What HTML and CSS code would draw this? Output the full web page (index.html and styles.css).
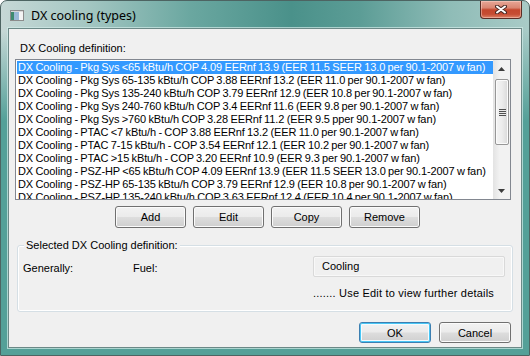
FILE: index.html
```html
<!DOCTYPE html>
<html lang="en">
<head>
    <meta charset="UTF-8">
    <title>DX cooling (types)</title>
    <link rel="stylesheet" href="styles.css">
</head>
<body>
    <div class="window">
        <div class="titlebar">
            <svg class="app-icon" width="14" height="11" viewBox="0 0 14 11">
                <rect x="0.5" y="0.5" width="13" height="10" fill="#f4f4f4" stroke="#8c8c8c"/>
                <rect x="1" y="1" width="3" height="9" fill="#3f8a6e"/>
                <rect x="4" y="1" width="5" height="9" fill="#9bb9d6"/>
                <rect x="1" y="1" width="12" height="1" fill="#d8d8d8"/>
            </svg>
            <span class="title">DX cooling (types)</span>
            <div class="close-btn">
                <svg width="12" height="9" viewBox="0 0 12 9">
                    <path d="M2 1.5 L10 7.5 M10 1.5 L2 7.5" stroke="#4a2a24" stroke-width="4" stroke-linecap="round"/>
                    <path d="M2 1.5 L10 7.5 M10 1.5 L2 7.5" stroke="#ffffff" stroke-width="2" stroke-linecap="round"/>
                </svg>
            </div>
        </div>

        <div class="client">
            <div class="caption">DX Cooling definition:</div>

            <div class="listbox">
                <ul class="items">
                    <li class="selected">DX Cooling - Pkg Sys &lt;65 kBtu/h COP 4.09 EERnf 13.9 (EER 11.5 SEER 13.0 per 90.1-2007 w fan)</li>
                    <li>DX Cooling - Pkg Sys 65-135 kBtu/h COP 3.88 EERnf 13.2 (EER 11.0 per 90.1-2007 w fan)</li>
                    <li>DX Cooling - Pkg Sys 135-240 kBtu/h COP 3.79 EERnf 12.9 (EER 10.8 per 90.1-2007 w fan)</li>
                    <li>DX Cooling - Pkg Sys 240-760 kBtu/h COP 3.4 EERnf 11.6 (EER 9.8 per 90.1-2007 w fan)</li>
                    <li>DX Cooling - Pkg Sys &gt;760 kBtu/h COP 3.28 EERnf 11.2 (EER 9.5 pper 90.1-2007 w fan)</li>
                    <li>DX Cooling - PTAC &lt;7 kBtu/h - COP 3.88 EERnf 13.2 (EER 11.0 per 90.1-2007 w fan)</li>
                    <li>DX Cooling - PTAC 7-15 kBtu/h - COP 3.54 EERnf 12.1 (EER 10.2 per 90.1-2007 w fan)</li>
                    <li>DX Cooling - PTAC &gt;15 kBtu/h - COP 3.20 EERnf 10.9 (EER 9.3 per 90.1-2007 w fan)</li>
                    <li>DX Cooling - PSZ-HP &lt;65 kBtu/h COP 4.09 EERnf 13.9 (EER 11.5 SEER 13.0 per 90.1-2007 w fan)</li>
                    <li>DX Cooling - PSZ-HP 65-135 kBtu/h COP 3.79 EERnf 12.9 (EER 10.8 per 90.1-2007 w fan)</li>
                    <li>DX Cooling - PSZ-HP 135-240 kBtu/h COP 3.63 EERnf 12.4 (EER 10.4 per 90.1-2007 w fan)</li>
                </ul>
                <div class="scrollbar">
                    <div class="sb-arrow">
                        <svg width="7" height="4" viewBox="0 0 7 4"><path d="M3.5 0 L7 4 L0 4 Z" fill="#3c3c3c"/></svg>
                    </div>
                    <div class="sb-track">
                        <div class="sb-thumb">
                            <span class="grip"></span>
                        </div>
                    </div>
                    <div class="sb-arrow">
                        <svg width="7" height="4" viewBox="0 0 7 4"><path d="M0 0 L7 0 L3.5 4 Z" fill="#3c3c3c"/></svg>
                    </div>
                </div>
            </div>

            <div class="list-actions">
                <button type="button" class="btn">Add</button>
                <button type="button" class="btn">Edit</button>
                <button type="button" class="btn">Copy</button>
                <button type="button" class="btn">Remove</button>
            </div>

            <div class="group">
                <div class="group-title">Selected DX Cooling definition:</div>
                <div class="group-row">
                    <span class="lbl lbl-general">Generally:</span>
                    <span class="lbl lbl-fuel">Fuel:</span>
                    <div class="field">Cooling</div>
                </div>
                <div class="hint">....... Use Edit to view further details</div>
            </div>

            <div class="dialog-actions">
                <button type="button" class="btn btn-wide btn-default">OK</button>
                <button type="button" class="btn btn-wide">Cancel</button>
            </div>
        </div>
    </div>
</body>
</html>
```

FILE: styles.css
```css
body {
    margin: 0;
    background: #ffffff;
    font-family: "Liberation Sans", Arial, sans-serif;
    font-size: 11px;
    color: #000;
}

.window {
    width: 530px;
    height: 356px;
    box-sizing: border-box;
    border: 1px solid #4d6462;
    border-radius: 7px 7px 0 0;
    background:
        linear-gradient(180deg, rgba(84, 158, 150, 0) 30px, #54a098 120px),
        linear-gradient(90deg, #c6d8d6 0%, #a5c7c3 16%, #6aa7a0 36%, #4a918a 55%, #5c9d96 68%, #8fbcb7 85%, #a9cbc7 100%);
}

.titlebar {
    height: 27px;
    display: flex;
    align-items: center;
}

.app-icon {
    margin-left: 9px;
    margin-top: 2px;
}

.title {
    margin-left: 7px;
    margin-top: 1px;
    font-family: "Noto Sans", sans-serif;
    font-size: 12.5px;
    color: #000;
}

.close-btn {
    margin-left: auto;
    margin-right: 7px;
    align-self: flex-start;
    width: 42px;
    height: 18px;
    box-sizing: border-box;
    border: 1px solid #5a2d25;
    border-top: none;
    border-radius: 0 0 4px 4px;
    background: linear-gradient(180deg, #e7a797 0%, #d98672 40%, #c4472d 52%, #c64d33 78%, #dd8468 100%);
    box-shadow: inset 0 0 0 1px rgba(255, 220, 210, 0.45);
    display: flex;
    align-items: center;
    justify-content: center;
}

.client {
    margin: 0 7px;
    width: 514px;
    height: 320px;
    box-sizing: border-box;
    border: 1px solid #6c8987;
    box-shadow: 0 0 0 1px rgba(210, 235, 232, 0.7);
    background: #f0f0f0;
    display: flex;
    flex-direction: column;
}

.caption {
    margin: 13px 0 0 11px;
    line-height: 13px;
}

/* list */
.listbox {
    margin: 4px 0 0 6px;
    width: 496px;
    height: 141px;
    box-sizing: border-box;
    border: 1px solid #828790;
    background: #fff;
    display: flex;
}

.items {
    flex: 1;
    margin: 0;
    padding: 1px 0 0 1px;
    list-style: none;
    overflow: hidden;
}

.items li {
    height: 13px;
    line-height: 13px;
    padding-left: 1px;
    white-space: nowrap;
    word-spacing: -0.6px;
    letter-spacing: -0.1px;
}

.items li.selected {
    background: #3399ff;
    color: #fff;
}

.scrollbar {
    width: 17px;
    display: flex;
    flex-direction: column;
    background: linear-gradient(90deg, #e3e3e3, #f2f2f2 40%, #f2f2f2);
}

.sb-arrow {
    height: 17px;
    display: flex;
    align-items: center;
    justify-content: center;
}

.sb-track {
    flex: 1;
}

.sb-thumb {
    margin: 2px 1px 0 2px;
    height: 66px;
    box-sizing: border-box;
    border: 1px solid #979797;
    border-radius: 2px;
    background: linear-gradient(90deg, #f4f4f4 0%, #ececec 50%, #d9d9d9 100%);
    box-shadow: inset 0 0 0 1px #fbfbfb;
    display: flex;
    align-items: center;
    justify-content: center;
}

.grip {
    width: 7px;
    height: 7px;
    background: repeating-linear-gradient(180deg, #4f4f4f 0, #4f4f4f 1px, #e8e8e8 1px, #e8e8e8 2px);
}

/* buttons */
.list-actions {
    margin-top: 6px;
    padding-left: 106px;
    display: flex;
    gap: 7px;
}

.btn {
    width: 71px;
    height: 22px;
    padding: 0;
    font-family: inherit;
    font-size: 11px;
    color: #000;
    border: 1px solid #707070;
    border-radius: 3px;
    background: linear-gradient(180deg, #f2f2f2 0%, #ebebeb 48%, #dddddd 52%, #cfcfcf 100%);
    box-shadow: inset 0 0 0 1px #fbfbfb;
}

.btn-wide {
    width: 72px;
    height: 21px;
}

.btn-default {
    border-color: #3c7fb1;
    box-shadow: inset 0 0 0 1px #48c6f5, inset 0 0 0 2px #f4fbfe;
}

/* group box */
.group {
    margin: 17px 0 0 8px;
    width: 496px;
    height: 67px;
    box-sizing: border-box;
    border: 1px solid #d5dfe5;
    border-radius: 3px;
    box-shadow: inset 0 0 0 1px #fff;
}

.group-title {
    margin: -7px 0 0 6px;
    padding: 0 2px;
    width: fit-content;
    line-height: 13px;
    background: #f0f0f0;
}

.group-row {
    margin-top: 4px;
    padding-left: 5px;
    height: 21px;
    display: flex;
    align-items: center;
}

.lbl {
    padding-top: 2px;
}

.lbl-general {
    width: 110px;
}

.lbl-fuel {
    width: 180px;
}

.field {
    width: 192px;
    height: 21px;
    box-sizing: border-box;
    padding-left: 8px;
    line-height: 19px;
    border: 1px solid #d9d9d9;
    border-radius: 2px;
    background: #f0f0f0;
    box-shadow: inset 0 0 0 1px #f8f8f8;
}

.hint {
    margin: 10px 0 0 295px;
    line-height: 13px;
    letter-spacing: 0.2px;
}

.dialog-actions {
    margin-top: 10px;
    padding-right: 10px;
    display: flex;
    justify-content: flex-end;
    gap: 8px;
}
```
